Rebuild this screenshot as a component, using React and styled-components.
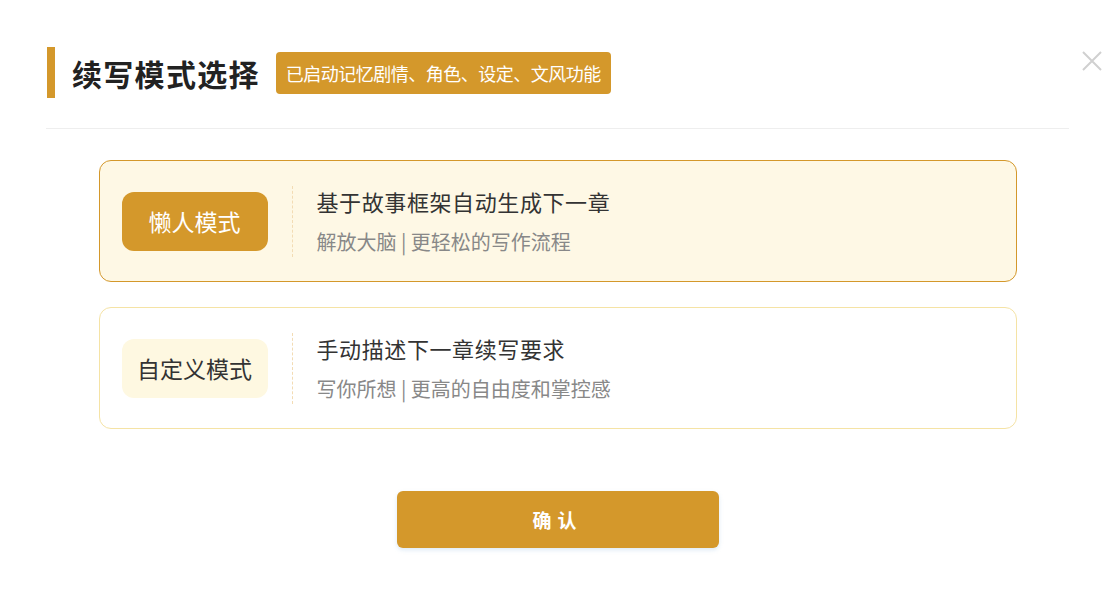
import React, { useState } from 'react';
import styled, { createGlobalStyle } from 'styled-components';

const gold = '#d4982b';

const GlobalStyle = createGlobalStyle`
  html, body {
    margin: 0;
    padding: 0;
    background: #fff;
    font-family: "Noto Sans CJK SC", "Noto Sans", sans-serif;
  }
`;

const Modal = styled.div`
  position: relative;
  width: 1115px;
  height: 596px;
  box-sizing: border-box;
  padding-top: 47px;
  background: #fff;
`;

const Header = styled.div`
  display: flex;
  align-items: center;
  margin-left: 47px;
  height: 51px;
`;

const Accent = styled.div`
  width: 8px;
  height: 51px;
  background: ${gold};
  margin-right: 17px;
`;

const Title = styled.h2`
  margin: 0;
  font-size: 30px;
  font-weight: 700;
  color: #222;
  letter-spacing: 1.3px;
`;

const Badge = styled.span`
  margin-left: 16px;
  height: 42px;
  padding: 0 10px;
  display: flex;
  align-items: center;
  border-radius: 4px;
  background: ${gold};
  color: #fff;
  font-size: 18px;
  letter-spacing: -0.5px;
`;

const Close = styled.button`
  position: absolute;
  top: 50px;
  right: 12px;
  width: 22px;
  height: 22px;
  padding: 0;
  border: none;
  background: none;
  cursor: pointer;
`;

const Divider = styled.div`
  height: 1px;
  background: #eeeeee;
  margin: 30px 46px 31px;
`;

const List = styled.div`
  display: flex;
  flex-direction: column;
  gap: 25px;
  width: 918px;
  margin: 0 auto;
`;

const Card = styled.div`
  display: flex;
  align-items: center;
  height: 122px;
  box-sizing: border-box;
  padding-left: 22px;
  border-radius: 12px;
  border: 1px solid ${p => (p.$active ? gold : '#f5e3a5')};
  background: ${p => (p.$active ? '#fef8e5' : '#fff')};
  cursor: pointer;
`;

const ModeTag = styled.div`
  width: 146px;
  height: 59px;
  border-radius: 12px;
  display: flex;
  align-items: center;
  justify-content: center;
  font-size: 23px;
  background: ${p => (p.$active ? gold : '#fef8e1')};
  color: ${p => (p.$active ? '#fff' : '#333')};
`;

const Sep = styled.div`
  width: 0;
  height: 71px;
  margin: 0 24px;
  border-left: 1px dashed #f3dcb4;
`;

const Info = styled.div`
  display: flex;
  flex-direction: column;
  gap: 14px;
`;

const Heading = styled.div`
  font-size: 22px;
  color: #333;
  line-height: 28px;
  letter-spacing: 0.6px;
`;

const Sub = styled.div`
  font-size: 20px;
  color: #888;
  line-height: 26px;
`;

const Footer = styled.div`
  display: flex;
  justify-content: center;
  margin-top: 62px;
`;

const Confirm = styled.button`
  width: 322px;
  height: 57px;
  border: none;
  border-radius: 6px;
  background: ${gold};
  color: #fff;
  font-family: inherit;
  font-size: 19px;
  font-weight: 700;
  letter-spacing: 6px;
  padding-left: 6px;
  box-shadow: 0 2px 4px rgba(120, 170, 220, 0.25);
  cursor: pointer;
`;

const modes = [
  { key: 'lazy', tag: '懒人模式', title: '基于故事框架自动生成下一章', desc: '解放大脑 | 更轻松的写作流程' },
  { key: 'custom', tag: '自定义模式', title: '手动描述下一章续写要求', desc: '写你所想 | 更高的自由度和掌控感' },
];

export default function App() {
  const [mode, setMode] = useState('lazy');
  return (
    <>
      <GlobalStyle />
      <Modal>
        <Header>
          <Accent />
          <Title>续写模式选择</Title>
          <Badge>已启动记忆剧情、角色、设定、文风功能</Badge>
        </Header>
        <Close aria-label="close">
          <svg width="22" height="22" viewBox="0 0 22 22">
            <path d="M2 2 L20 20 M20 2 L2 20" stroke="#d0d0d0" strokeWidth="2" />
          </svg>
        </Close>
        <Divider />
        <List>
          {modes.map(m => (
            <Card key={m.key} $active={mode === m.key} onClick={() => setMode(m.key)}>
              <ModeTag $active={mode === m.key}>{m.tag}</ModeTag>
              <Sep />
              <Info>
                <Heading>{m.title}</Heading>
                <Sub>{m.desc}</Sub>
              </Info>
            </Card>
          ))}
        </List>
        <Footer>
          <Confirm>确认</Confirm>
        </Footer>
      </Modal>
    </>
  );
}
